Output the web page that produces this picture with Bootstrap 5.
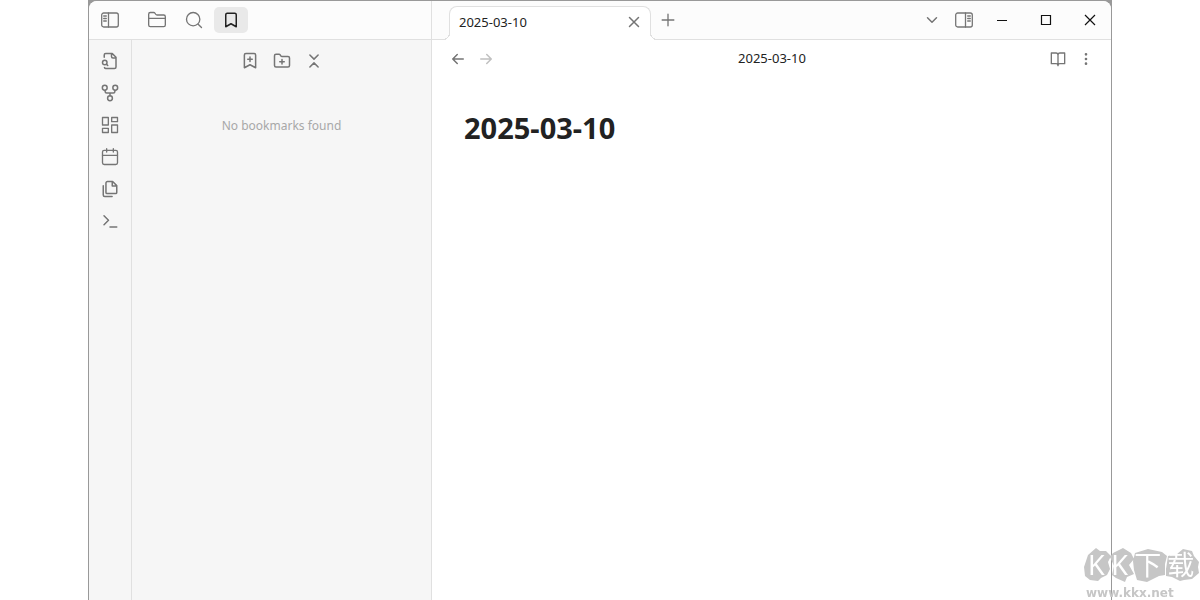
<!DOCTYPE html>
<html lang="en">
<head>
<meta charset="utf-8">
<meta name="viewport" content="width=device-width, initial-scale=1">
<title>2025-03-10</title>
<link href="https://cdn.jsdelivr.net/npm/bootstrap@5.3.0/dist/css/bootstrap.min.css" rel="stylesheet">
<style>
  :root { --line: #e0e0e0; --ico: #757575; --ink: #222; }
  body { font-family: "Noto Sans", "Open Sans", sans-serif; font-size: 13px; line-height: 18px; color: var(--ink); background: #fff; }
  .stage { padding: 0 88px; }
  .frame { background: #999; padding: 1px 1px 0; }
  .app { border-radius: 8px 8px 0 0; background: #fff; overflow: hidden; }
  .titlebar { height: 39px; background: #fcfcfc; }
  .side-head { width: 343px; border-right: 1px solid var(--line); border-bottom: 1px solid var(--line); padding: 0 4px; gap: 3px; }
  .side-toggle { margin-right: 10px; }
  .tabs-head { border-bottom: 1px solid var(--line); padding-left: 17px; }
  .ib { display: inline-flex; align-items: center; justify-content: center; border: 0; padding: 0; background: none; color: var(--ico); border-radius: 5px; width: 34px; height: 26px; flex: none; }
  .ib svg { fill: none; stroke: currentColor; stroke-width: 2; stroke-linecap: round; stroke-linejoin: round; }
  .ib svg.thin { stroke-width: 1.6; }
  .ib svg.pane { stroke-width: 1.3; }
  .ib.on { background: #e9e9e9; color: var(--ink); }
  .ib.tool { width: 32px; height: 32px; }
  .ib.view { width: 28px; height: 28px; }
  .ib.win { width: 44px; height: 38px; color: #111; border-radius: 0; }
  .ib.win svg { stroke-width: 1.2; stroke-linecap: butt; stroke-linejoin: miter; }
  .win-set { margin-right: -1px; }
  .ib:disabled { opacity: .45; }
  .doc-tab { width: 202px; height: 34px; margin-bottom: -1px; background: #fff; border: 1px solid var(--line); border-bottom: 0; border-radius: 8px 8px 0 0; padding: 0 2px 3px 9px; }
  .doc-tab::before, .doc-tab::after { content: ""; position: absolute; bottom: 0; width: 7px; height: 7px; }
  .doc-tab::before { left: -7px; background: radial-gradient(circle at 0 0, #fcfcfc 6px, var(--line) 6px, var(--line) 7px, #fff 7px); }
  .doc-tab::after { right: -7px; background: radial-gradient(circle at 100% 0, #fcfcfc 6px, var(--line) 6px, var(--line) 7px, #fff 7px); }
  .rail { width: 43px; background: #f6f6f6; border-right: 1px solid var(--line); padding-top: 5px; }
  .panel { width: 300px; background: #f6f6f6; border-right: 1px solid var(--line); padding-top: 5px; }
  .empty { margin-top: 40px; color: #a8a8a8; font-size: 12px; }
  .view-head { height: 38px; padding: 0 11px 0 12px; }
  .view-title { padding-bottom: 2px; }
  .note { padding: 32px; }
  .note h1 { font-size: 29px; line-height: 36px; font-weight: 700; margin: 0; }
  .mark-kkx { right: 0; bottom: 0; width: 116px; pointer-events: none; color: #c6c6c6; }
  .mark-kkx svg { display: block; fill: currentColor; }
  .mark-name { inset: 0 0 auto 4px; height: 34px; color: #fff; font: 27px/34px "Noto Sans", "Noto Sans CJK SC", sans-serif; }
  .mark-name span { width: 24px; }
  .mark-name .han { width: 34px; }
  .mark-url { font: bold 12px/18px "DejaVu Sans", sans-serif; height: 16px; padding-left: 2px; }
</style>
<script src="https://cdn.jsdelivr.net/npm/bootstrap@5.3.0/dist/js/bootstrap.bundle.min.js"></script>
</head>
<body>
<div class="stage vh-100 d-flex">
  <div class="frame flex-grow-1 d-flex">
    <div class="app flex-grow-1 d-flex flex-column">
      <header class="titlebar d-flex flex-shrink-0">
        <div class="side-head d-flex align-items-center flex-shrink-0">
          <button class="ib side-toggle" aria-label="Toggle left sidebar"><svg class="pane" width="18" height="16" viewBox="0 0 18 16"><rect x=".7" y="1" width="16.6" height="14" rx="2"/><path d="M7.500 1v14M2.700 4h2.600M2.700 6.500h2.600M2.700 9h2.600"/></svg></button>
          <button class="ib" aria-label="Files"><svg class="thin" width="20" height="20" viewBox="0 0 24 24"><path d="M20 20a2 2 0 0 0 2-2V8a2 2 0 0 0-2-2h-7.900a2 2 0 0 1-1.700-.9L9.600 3.900A2 2 0 0 0 7.900 3H4a2 2 0 0 0-2 2v13a2 2 0 0 0 2 2ZM2 10h20"/></svg></button>
          <button class="ib" aria-label="Search"><svg class="thin" width="20" height="20" viewBox="0 0 24 24"><circle cx="11" cy="11" r="8"/><path d="m21 21-4-4"/></svg></button>
          <button class="ib on" aria-label="Bookmarks"><svg width="18" height="18" viewBox="0 0 24 24"><path d="m19 21-7-4-7 4V5a2 2 0 0 1 2-2h10a2 2 0 0 1 2 2z"/></svg></button>
        </div>
        <div class="tabs-head d-flex align-items-center flex-grow-1">
          <div class="doc-tab position-relative d-flex align-items-center justify-content-between align-self-end">
            <span>2025-03-10</span>
            <button class="ib view" aria-label="Close tab"><svg width="18" height="18" viewBox="0 0 24 24"><path d="M18 6 6 18M6 6l12 12"/></svg></button>
          </div>
          <button class="ib ms-0" aria-label="New tab"><svg class="thin" width="20" height="20" viewBox="0 0 24 24"><path d="M5 12h14M12 5v14"/></svg></button>
          <button class="ib tool ms-auto" aria-label="Tab list"><svg width="18" height="18" viewBox="0 0 24 24"><path d="m6 9 6 6 6-6"/></svg></button>
          <button class="ib tool" aria-label="Toggle right sidebar"><svg class="pane" width="18" height="16" viewBox="0 0 18 16"><rect x=".7" y="1" width="16.600" height="14" rx="2"/><path d="M10.500 1v14M12.700 4h2.600M12.700 6.500h2.600M12.700 9h2.600"/></svg></button>
          <div class="win-set d-flex">
            <button class="ib win" aria-label="Minimize"><svg width="12" height="12" viewBox="0 0 12 12"><path d="M1 6.500h10"/></svg></button>
            <button class="ib win" aria-label="Maximize"><svg width="12" height="12" viewBox="0 0 12 12"><path d="M1.500 1.500h9v9h-9z"/></svg></button>
            <button class="ib win" aria-label="Close"><svg width="12" height="12" viewBox="0 0 12 12"><path d="m1 1 10 10M11 1 1 11"/></svg></button>
          </div>
        </div>
      </header>
      <div class="d-flex flex-grow-1">
        <nav class="rail d-flex flex-column align-items-center flex-shrink-0" aria-label="Ribbon">
          <button class="ib tool" aria-label="Quick switcher"><svg width="18" height="18" viewBox="0 0 24 24"><path d="M14 2v4a2 2 0 0 0 2 2h4M4.300 7V4a2 2 0 0 1 2-2H15l5 5v13a2 2 0 0 1-2 2H6.500a2 2 0 0 1-1.900-1.200M9 18l-1.500-1.500"/><circle cx="5" cy="14" r="3"/></svg></button>
          <button class="ib tool" aria-label="Graph view"><svg width="18" height="18" viewBox="0 0 24 24"><circle cx="12" cy="19" r="3.200"/><circle cx="5" cy="5" r="3.200"/><circle cx="19" cy="5" r="3.200"/><path d="M18.500 8.500V10a2 2 0 0 1-2 2h-9a2 2 0 0 1-2-2V8.500M12 12v3.500"/></svg></button>
          <button class="ib tool" aria-label="Canvas"><svg class="thin" width="20" height="20" viewBox="0 0 24 24"><rect x="3" y="3" width="7" height="9"/><rect x="14" y="3" width="7" height="5"/><rect x="14" y="12" width="7" height="9"/><rect x="3" y="16" width="7" height="5"/></svg></button>
          <button class="ib tool" aria-label="Daily note"><svg class="thin" width="20" height="20" viewBox="0 0 24 24"><rect x="3" y="4" width="18" height="17" rx="2"/><path d="M16 2v4M8 2v4M3 10h18"/></svg></button>
          <button class="ib tool" aria-label="Templates"><svg width="18" height="18" viewBox="0 0 24 24"><path d="M15.500 2H8.600a2 2 0 0 0-2 2v12.500c0 .8.700 1.500 1.500 1.500h11.400c.8 0 1.500-.7 1.500-1.500V7.500zM15 2v6h6M3 7.600V20a2 2 0 0 0 2 2h9.800"/></svg></button>
          <button class="ib tool" aria-label="Command palette"><svg width="18" height="18" viewBox="0 0 24 24"><path d="m4 17 6-6-6-6M12 20h9"/></svg></button>
        </nav>
        <aside class="panel flex-shrink-0 text-center">
          <div class="d-flex justify-content-center">
            <button class="ib tool" aria-label="Bookmark this note"><svg width="18" height="18" viewBox="0 0 24 24"><path d="m19.500 21-7.500-4-7.500 4V4a2 2 0 0 1 2-2h11a2 2 0 0 1 2 2zM12 6.500v6M9 9.500h6"/></svg></button>
            <button class="ib tool" aria-label="New group"><svg width="18" height="18" viewBox="0 0 24 24"><path d="M4 20h16a2 2 0 0 0 2-2V8a2 2 0 0 0-2-2h-7.900a2 2 0 0 1-1.700-.9L9.600 3.900A2 2 0 0 0 7.900 3H4a2 2 0 0 0-2 2v13a2 2 0 0 0 2 2ZM12 10v6M9 13h6"/></svg></button>
            <button class="ib tool" aria-label="Collapse all"><svg width="18" height="18" viewBox="0 0 24 24"><path d="m6.500 20 5.500-5.500 5.500 5.500M6.500 4 12 9.500 17.500 4"/></svg></button>
          </div>
          <p class="empty mb-0">No bookmarks found</p>
        </aside>
        <main class="flex-grow-1">
          <div class="view-head d-flex align-items-center">
            <button class="ib view" aria-label="Back"><svg width="18" height="18" viewBox="0 0 24 24"><path d="m11 18-6-6 6-6M19 12H5"/></svg></button>
            <button class="ib view" aria-label="Forward" disabled><svg width="18" height="18" viewBox="0 0 24 24"><path d="M5 12h14M13 6l6 6-6 6"/></svg></button>
            <div class="view-title flex-grow-1 text-center">2025-03-10</div>
            <button class="ib view" aria-label="Reading view"><svg width="16" height="16" viewBox="0 0 24 24"><path d="M2 3h7a3 3 0 0 1 3 3v16a3 3 0 0 0-3-3H2zM22 3h-7a3 3 0 0 0-3 3v16a3 3 0 0 1 3-3h7z"/></svg></button>
            <button class="ib view" aria-label="More options"><svg width="16" height="16" viewBox="0 0 24 24"><circle cx="12" cy="12" r="1"/><circle cx="12" cy="5" r="1"/><circle cx="12" cy="19" r="1"/></svg></button>
          </div>
          <article class="note"><h1>2025-03-10</h1></article>
        </main>
      </div>
    </div>
  </div>
</div>
<div class="mark-kkx position-fixed">
  <svg width="116" height="36" viewBox="0 0 116 36" aria-hidden="true"><path d="m4 7 8-7 4 3 6 0 5 5-3 6 2 7-3 6-6 3-3 3-8-1-5-4-1-9zM29 5l10-5 8 5 3 6-5 6 5 9-7 3-2 5-9-4-4-3 2-9-4-9zM51 5l13-4 14 3 5 4-2 8 0 11-6 1-12 6-10-2-3-10-1-9zM84 8l9-2 6-5 9 2 2 5 5 6-1 5 1 6-7 6-8 1-4 1-8-4-6-1 0-7z"/></svg>
  <div class="mark-name position-absolute d-flex"><span>K</span><span>K</span><span class="han">下</span><span class="han">载</span></div>
  <div class="mark-url">www.kkx.net</div>
</div>
</body>
</html>
